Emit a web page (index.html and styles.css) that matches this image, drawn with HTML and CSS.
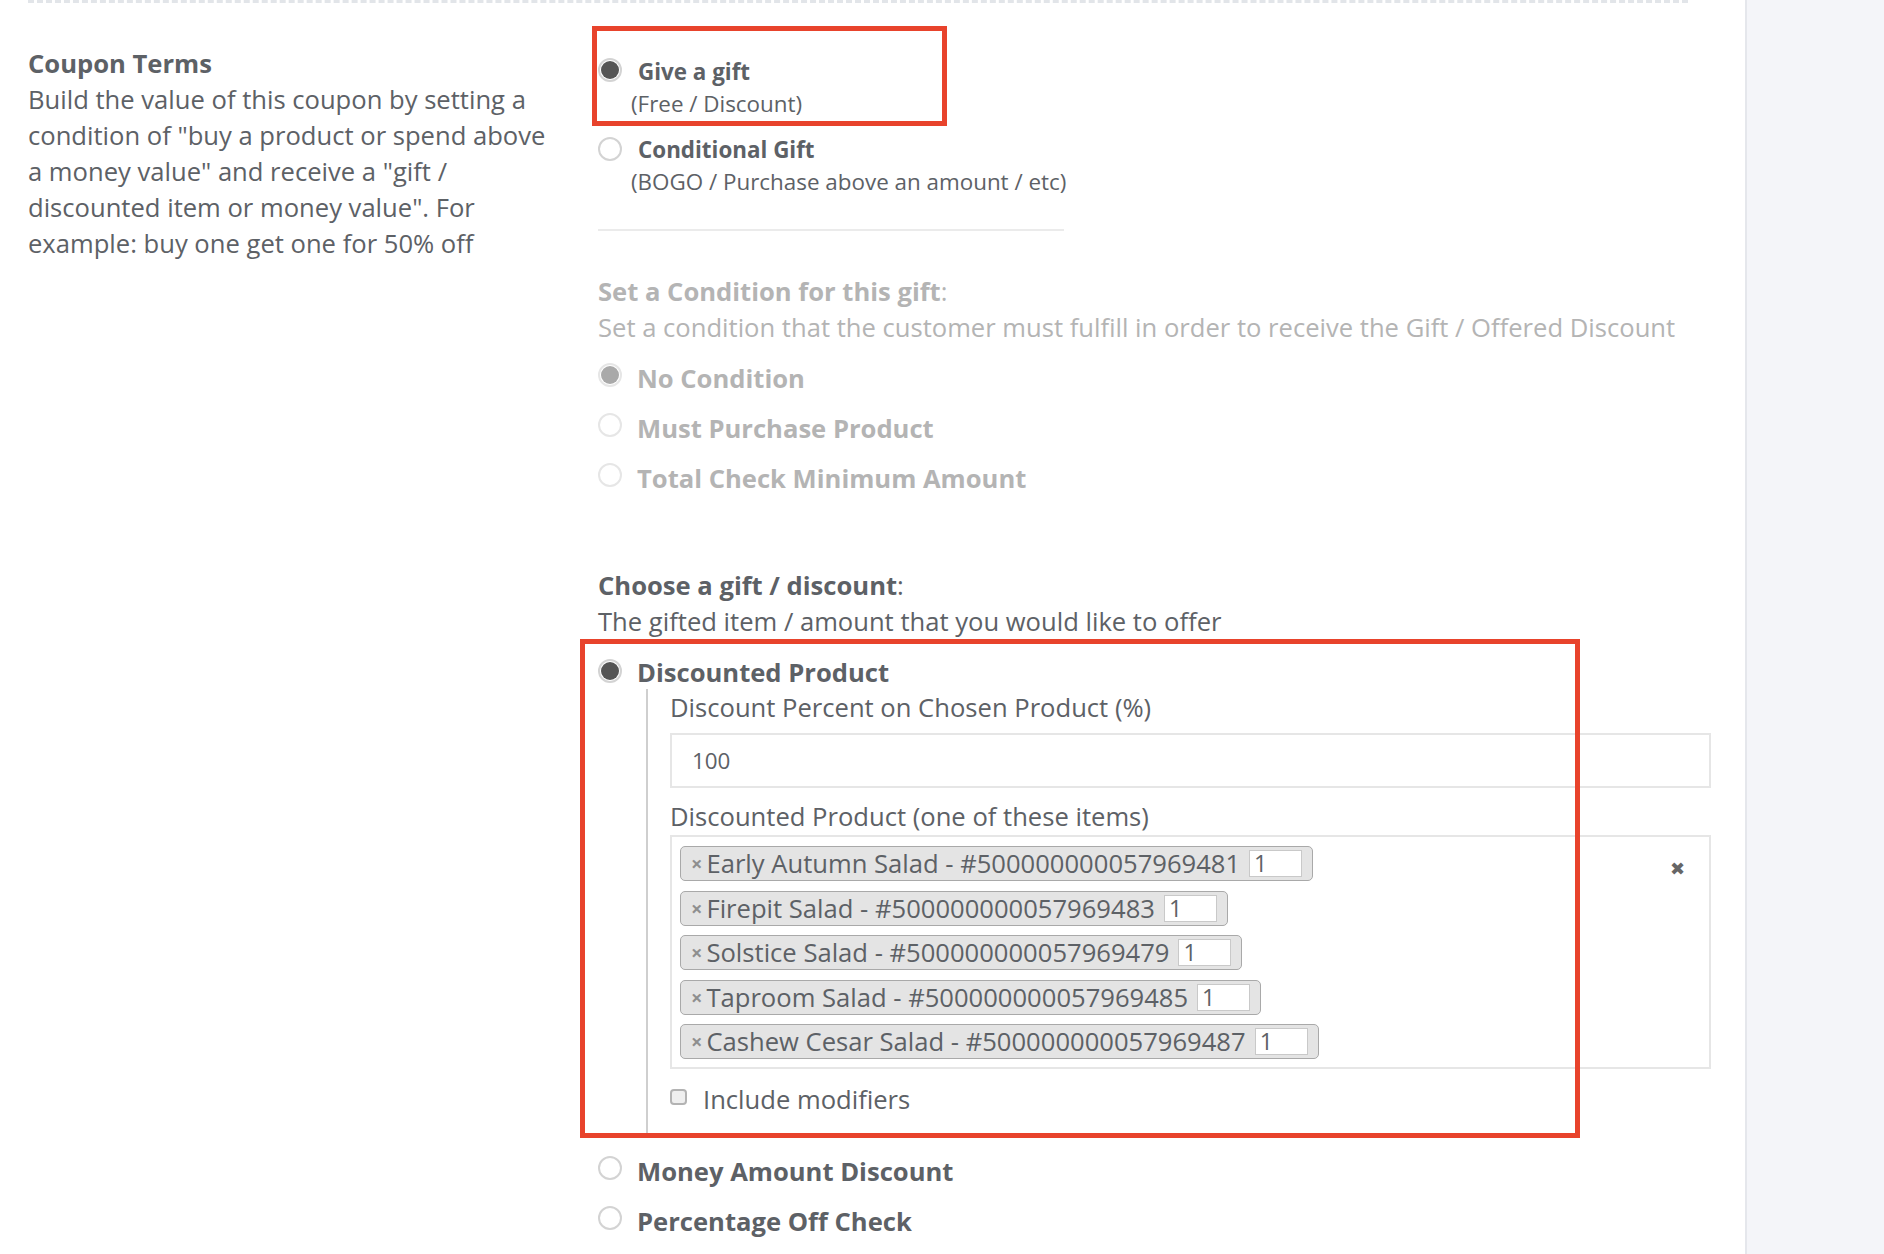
FILE: index.html
```html
<!DOCTYPE html>
<html lang="en">
  <head>
    <meta charset="UTF-8" />
    <meta name="viewport" content="width=device-width, initial-scale=1.0" />
    <title>Coupon Terms</title>
    <link rel="stylesheet" href="styles.css">
  </head>

  <body>
    <div class="page">
      <div class="main">
        <div class="dashline"></div>

        <div class="row">
          <div class="side">
            <h3>Coupon Terms</h3>
            <p>Build the value of this coupon by setting a condition of "buy a product or spend above a money value" and receive a "gift / discounted item or money value". For example: buy one get one for 50% off</p>
          </div>

          <div class="content">
            <!-- coupon type -->
            <div class="opt mark1">
              <span class="radio on"></span>
              <div>
                <div class="opt-label">Give a gift</div>
                <div class="opt-sub">(Free / Discount)</div>
              </div>
            </div>
            <div class="opt opt2">
              <span class="radio"></span>
              <div>
                <div class="opt-label">Conditional Gift</div>
                <div class="opt-sub">(BOGO / Purchase above an amount / etc)</div>
              </div>
            </div>

            <div class="divider"></div>

            <!-- condition, disabled -->
            <div class="group disabled">
              <div class="title"><b>Set a Condition for this gift</b>:</div>
              <div class="desc">Set a condition that the customer must fulfill in order to receive the Gift / Offered Discount</div>
              <div class="choices">
                <div class="choice"><span class="radio on"></span><b>No Condition</b></div>
                <div class="choice"><span class="radio"></span><b>Must Purchase Product</b></div>
                <div class="choice"><span class="radio"></span><b>Total Check Minimum Amount</b></div>
              </div>
            </div>

            <!-- gift -->
            <div class="group gift">
              <div class="title"><b>Choose a gift / discount</b>:</div>
              <div class="desc">The gifted item / amount that you would like to offer</div>

              <div class="mark2">
                <div class="choice first"><span class="radio on"></span><b>Discounted Product</b></div>
                <div class="nested">
                  <div class="field-label">Discount Percent on Chosen Product (%)</div>
                  <div class="input">100</div>

                  <div class="field-label second">Discounted Product (one of these items)</div>
                  <div class="select">
                    <div class="tags">
                      <div class="tag"><span class="x">&times;</span>Early Autumn Salad - #500000000057969481<span class="qty">1</span></div>
                      <div class="tag"><span class="x">&times;</span>Firepit Salad - #500000000057969483<span class="qty">1</span></div>
                      <div class="tag"><span class="x">&times;</span>Solstice Salad - #500000000057969479<span class="qty">1</span></div>
                      <div class="tag"><span class="x">&times;</span>Taproom Salad - #500000000057969485<span class="qty">1</span></div>
                      <div class="tag"><span class="x">&times;</span>Cashew Cesar Salad - #500000000057969487<span class="qty">1</span></div>
                    </div>
                    <span class="clear">&#x2716;</span>
                  </div>

                  <div class="check"><span class="box"></span>Include modifiers</div>
                </div>
              </div>

              <div class="choice"><span class="radio"></span><b>Money Amount Discount</b></div>
              <div class="choice"><span class="radio"></span><b>Percentage Off Check</b></div>
            </div>
          </div>
        </div>
      </div>

      <div class="aside"></div>
    </div>
  </body>
</html>
```

FILE: styles.css
```css
* {
  margin: 0;
  padding: 0;
  box-sizing: border-box;
}

body {
  font-family: "Open Sans", "Liberation Sans", sans-serif;
  color: #5d6166;
  background-color: #fff;
}

.page {
  display: flex;
  height: 1254px;
  overflow: hidden;
}

.main {
  width: 1745px;
  padding: 0 34px 0 28px;
}

.aside {
  flex: 1;
  background-color: #f4f5f9;
  border-left: 2px solid #e5e7ec;
}

.dashline {
  width: 1660px;
  border-top: 3px dashed #e2e5e9;
}

.row {
  display: flex;
}

/* left description */
.side {
  width: 570px;
  padding: 43px 40px 0 0;
  font-size: 25.6px;
  line-height: 36px;
}

.side h3 {
  font-size: 25.6px;
  font-weight: 700;
}

/* right column */
.content {
  flex: 1;
  padding-top: 54px;
}

.radio {
  position: relative;
  flex: none;
  width: 24px;
  height: 24px;
  border: 2px solid #d3d3d3;
  border-radius: 50%;
  background-color: #fff;
}

.radio.on::after {
  content: "";
  position: absolute;
  top: 1px;
  left: 1px;
  width: 18px;
  height: 18px;
  border-radius: 50%;
  background-color: #555;
}

.opt {
  display: flex;
  gap: 9px;
}

.opt .radio {
  margin-top: 1px;
}

.opt-label {
  padding-left: 7px;
  font-size: 22.4px;
  font-weight: 700;
  line-height: 30px;
}

.opt-sub {
  margin-top: 1px;
  font-size: 22.4px;
  line-height: 32px;
}

.opt2 {
  margin-top: 15px;
}

.opt2 .radio {
  margin-top: 2px;
}

/* red marker boxes */
.mark1,
.mark2 {
  position: relative;
}

.mark1::after,
.mark2::after {
  content: "";
  position: absolute;
  border: 5px solid #e8432c;
  pointer-events: none;
}

.mark1::after {
  top: -31px;
  left: -6px;
  right: 764px;
  bottom: -6px;
}

.mark2::after {
  top: -18px;
  left: -18px;
  right: 131px;
  bottom: -5px;
}

.divider {
  width: 466px;
  height: 2px;
  margin-top: 31px;
  background-color: #ebebeb;
}

.group .title,
.group .desc {
  font-size: 25.6px;
  line-height: 36px;
}

.disabled {
  margin-top: 43px;
  color: #b4b4b4;
}

.choices {
  margin-top: 7px;
}

.choice {
  display: flex;
  align-items: center;
  gap: 15px;
  height: 50px;
  font-size: 25.6px;
}

.choice .radio {
  margin-top: -6px;
}

.disabled .radio {
  border-color: #e6e6e6;
}

.disabled .radio.on::after {
  background-color: #a9a9a9;
}

.gift {
  margin-top: 65px;
}

.mark2 {
  margin-top: 17px;
}

.gift .choice.first {
  height: 30px;
}

.gift .choice.first .radio {
  margin-top: -2px;
}

.nested {
  margin: 2px 0 0 48px;
  padding: 3px 0 18px 22px;
  border-left: 2px solid #cfcfcf;
}

.field-label {
  font-size: 25.6px;
  line-height: 32px;
}

.field-label.second {
  margin-top: 13px;
}

.input {
  height: 55px;
  margin-top: 9px;
  padding-left: 20px;
  border: 2px solid #e6e6e6;
  font-size: 22.4px;
  line-height: 51px;
}

.select {
  display: flex;
  justify-content: space-between;
  height: 234px;
  margin-top: 2px;
  padding: 9px 24px 0 8px;
  border: 2px solid #e6e6e6;
}

.tags {
  display: flex;
  flex-direction: column;
  align-items: flex-start;
  gap: 9.5px;
}

.tag {
  display: flex;
  align-items: center;
  height: 35px;
  padding: 0 10px 0 10px;
  border: 1px solid #a9a9a9;
  border-radius: 5px;
  background-color: #e4e4e4;
  font-size: 25.6px;
  color: #5d6166;
}

.tag .x {
  margin-right: 4px;
  font-size: 20px;
  font-weight: 700;
  color: #8f8f8f;
}

.tag .qty {
  width: 53px;
  height: 27px;
  margin-left: 9px;
  padding-left: 4px;
  border: 1px solid #c9c9c9;
  background-color: #fff;
  font-size: 23px;
  line-height: 25px;
}

.clear {
  margin-top: 10px;
  font-size: 18px;
  color: #666;
}

.check {
  display: flex;
  align-items: center;
  gap: 16px;
  margin-top: 16px;
  font-size: 25.6px;
  line-height: 30px;
}

.check .box {
  width: 17px;
  height: 16px;
  margin-top: -7px;
  border: 2px solid #b3b3b3;
  border-radius: 4px;
  background-color: #efefef;
}

.mark2 + .choice {
  margin-top: 13px;
}
```
